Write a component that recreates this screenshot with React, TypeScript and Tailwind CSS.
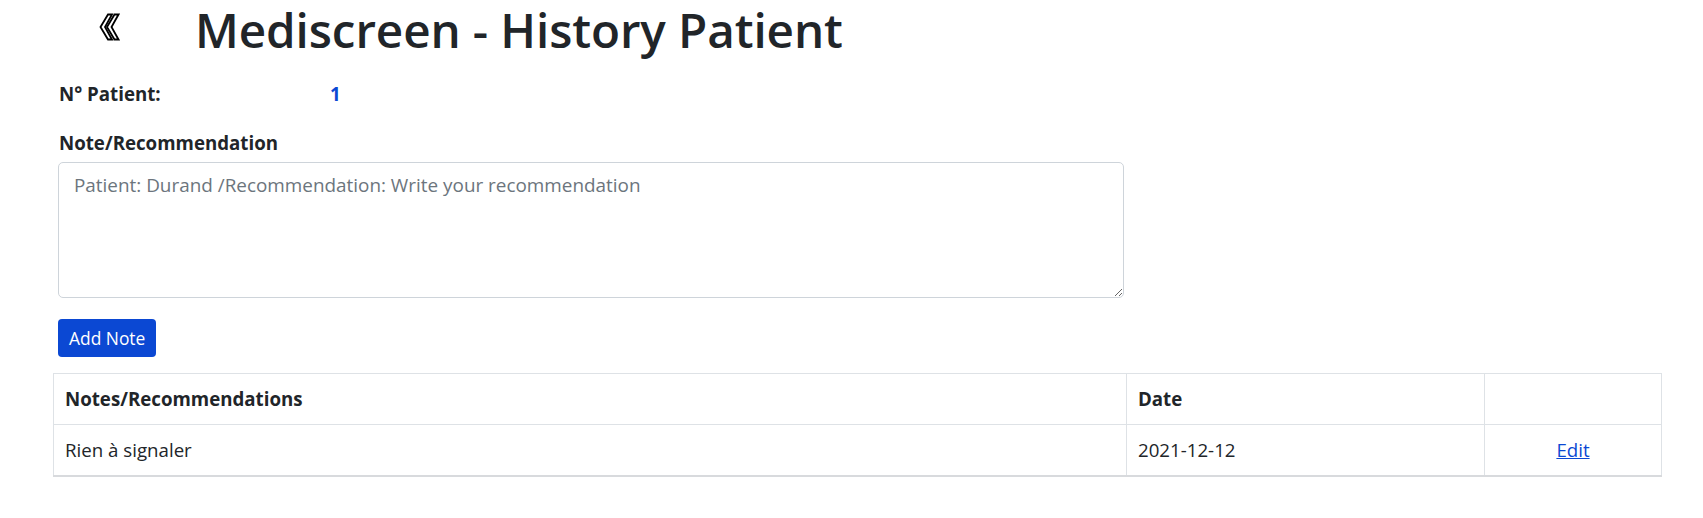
import { useState } from 'react';

const NOTES = [{ id: 1, text: 'Rien à signaler', date: '2021-12-12' }];

function BackIcon() {
  // outlined double chevron
  return (
    <svg width="21" height="28" viewBox="0 0 21 28" aria-hidden="true">
      <polygon
        points="8,14 15.5,1.5 19.5,1.5 12.5,14 19.5,26.5 15.5,26.5"
        fill="white"
        stroke="black"
        strokeWidth="1.8"
        strokeLinejoin="miter"
      />
      <polygon
        points="1.5,14 9,1.5 13,1.5 6,14 13,26.5 9,26.5"
        fill="white"
        stroke="black"
        strokeWidth="1.8"
        strokeLinejoin="miter"
      />
    </svg>
  );
}

export default function App() {
  const [note, setNote] = useState('');

  return (
    <div className="min-h-screen bg-white text-[#212529] font-['Open_Sans','Noto_Sans',sans-serif]">
      {/* Header */}
      <header className="flex items-start h-[60px] pl-[99px]">
        <a href="#" className="w-[96px] pt-[13px]" aria-label="Back">
          <BackIcon />
        </a>
        <h1 className="text-[47.6px] leading-[60px] font-[550] tracking-[-0.1px]">
          Mediscreen - History Patient
        </h1>
      </header>

      {/* Patient info + form */}
      <div className="pl-[58px] pt-[19px]">
        <div className="flex text-[18.7px] leading-[30px] font-bold">
          <span className="w-[272px] pl-px">N° Patient:</span>
          <span className="text-[#0b48d3]">1</span>
        </div>

        <label className="block mt-[19px] pl-px text-[18.7px] leading-[30px] font-bold">
          Note/Recommendation
        </label>
        <textarea
          value={note}
          onChange={(e) => setNote(e.target.value)}
          placeholder="Patient: Durand /Recommendation: Write your recommendation"
          className="block mt-[4px] w-[1066px] h-[136px] border border-[#ced4da] rounded-[5px] px-[15px] py-[7px] text-[18.9px] leading-[30px] placeholder:text-[#6c757d] outline-none"
        />

        <button className="mt-[21px] h-[38px] px-[11px] rounded-[4px] bg-[#0b48d3] text-white text-[17.4px] leading-[26px]">
          Add Note
        </button>
      </div>

      {/* History table */}
      <div className="pl-[53px] pr-[41px] mt-[16px]">
        <table className="w-full border-collapse text-[18.7px] leading-[30px]">
          <thead>
            <tr>
              <th className="w-[1073px] border border-[#dee2e6] px-[11px] py-[10px] text-left font-bold">
                Notes/Recommendations
              </th>
              <th className="w-[358px] border border-[#dee2e6] px-[11px] py-[10px] text-left font-bold">
                Date
              </th>
              <th className="border border-[#dee2e6] px-[11px] py-[10px]"></th>
            </tr>
          </thead>
          <tbody>
            {NOTES.map((n) => (
              <tr key={n.id} className="border-b-2 border-b-[#d8dadd]">
                <td className="border-x border-t border-[#dee2e6] px-[11px] py-[10px]">{n.text}</td>
                <td className="border-x border-t border-[#dee2e6] px-[11px] py-[10px]">{n.date}</td>
                <td className="border-x border-t border-[#dee2e6] px-[11px] py-[10px] text-center">
                  <a href="#" className="text-[#0b48d3] underline">
                    Edit
                  </a>
                </td>
              </tr>
            ))}
          </tbody>
        </table>
      </div>
    </div>
  );
}
